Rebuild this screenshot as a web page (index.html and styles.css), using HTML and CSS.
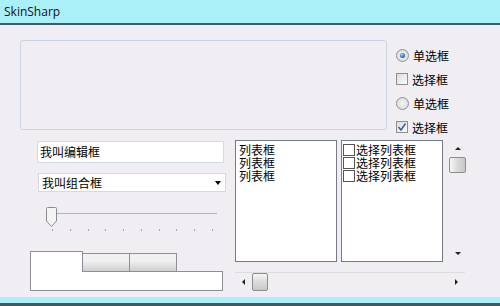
FILE: index.html
```html
<!DOCTYPE html>
<html lang="zh-CN">
  <head>
    <meta charset="UTF-8" />
    <title>SkinSharp</title>
    <link rel="stylesheet" href="styles.css">
  </head>
  <body>
    <div class="window">
      <div class="titlebar">SkinSharp</div>
      <div class="client">
        <div class="top">
          <div class="group"></div>
          <div class="options">
            <label class="option"><span class="radio on"></span>单选框</label>
            <label class="option"><span class="check"></span>选择框</label>
            <label class="option"><span class="radio"></span>单选框</label>
            <label class="option">
              <span class="check">
                <svg width="10" height="10" viewBox="0 0 10 10">
                  <path d="M1.5 5 L4 8 L8.5 1.5" fill="none" stroke="#3b5fa8" stroke-width="1.6" />
                </svg>
              </span>选择框
            </label>
          </div>
        </div>
        <div class="bottom">
          <div class="left">
            <div class="edit">我叫编辑框</div>
            <div class="combo">
              <span>我叫组合框</span>
              <span class="arrow-down"></span>
            </div>
            <div class="slider">
              <div class="track"></div>
              <svg class="thumb" width="11" height="20" viewBox="0 0 11 20">
                <path d="M0.5 1.5 Q0.5 0.5 1.5 0.5 L9.5 0.5 Q10.5 0.5 10.5 1.5 L10.5 14 L5.5 19.5 L0.5 14 Z" fill="#f4f4f4" stroke="#8c8c8c" />
              </svg>
              <div class="ticks">
                <i></i><i></i><i></i><i></i><i></i><i></i><i></i><i></i><i></i><i></i>
              </div>
            </div>
            <div class="tabs">
              <div class="tab-strip">
                <div class="tab active"></div>
                <div class="tab"></div>
                <div class="tab"></div>
              </div>
              <div class="tab-panel"></div>
            </div>
          </div>
          <div class="lists">
            <div class="listbox">
              <div>列表框</div>
              <div>列表框</div>
              <div>列表框</div>
            </div>
            <div class="listbox">
              <div class="item"><span class="box"></span>选择列表框</div>
              <div class="item"><span class="box"></span>选择列表框</div>
              <div class="item"><span class="box"></span>选择列表框</div>
            </div>
            <div class="vscroll">
              <div class="btn"><span class="tri-up"></span></div>
              <div class="sthumb v"></div>
              <div class="space"></div>
              <div class="btn"><span class="tri-down"></span></div>
            </div>
            <div class="hscroll">
              <div class="btn"><span class="tri-left"></span></div>
              <div class="sthumb h"></div>
              <div class="space"></div>
              <div class="btn"><span class="tri-right"></span></div>
            </div>
          </div>
        </div>
      </div>
      <div class="statusbar"></div>
    </div>
  </body>
</html>
```

FILE: styles.css
```css
body {
  margin: 0;
  padding: 0;
  font-family: "Noto Sans CJK SC", "Noto Sans", sans-serif;
  font-size: 12px;
  color: #000;
}
.window {
  width: 500px;
  height: 306px;
  overflow: hidden;
  background: #f0eef2;
  display: flex;
  flex-direction: column;
}
.titlebar {
  height: 23px;
  border-bottom: 2px solid #3e5c60;
  background: #aaf0f8;
  font-family: "Open Sans", sans-serif;
  font-size: 12px;
  line-height: 23px;
  padding-left: 4px;
  color: #111;
}
.client {
  height: 272px;
  padding-left: 20px;
}
.top {
  display: flex;
  align-items: flex-start;
  margin-top: 15px;
}
.group {
  width: 365px;
  height: 88px;
  border: 1px solid #c9d4e6;
  border-radius: 3px;
}
.options {
  margin-left: 9px;
  padding-top: 3px;
}
.option {
  display: flex;
  align-items: center;
  height: 24px;
  gap: 4px;
}
.radio {
  width: 11px;
  height: 11px;
  border: 1px solid #8d9299;
  border-radius: 50%;
  background: radial-gradient(circle at 50% 50%, #f4f4f4, #d6d6d6);
  display: flex;
  align-items: center;
  justify-content: center;
}
.radio.on::after {
  content: "";
  width: 5px;
  height: 5px;
  border-radius: 50%;
  background: radial-gradient(circle at 40% 35%, #9ed4f6, #1d5c9e 70%);
}
.check {
  width: 10px;
  height: 10px;
  border: 1px solid #8f8f8f;
  background: linear-gradient(135deg, #dcdcdc, #fafafa);
  display: flex;
  align-items: center;
  justify-content: center;
}
.bottom {
  display: flex;
  margin-top: 1px;
  padding-left: 17px;
}
.left {
  width: 188px;
}
.edit {
  margin-top: 1px;
  width: 183px;
  height: 20px;
  border: 1px solid #d3dae3;
  background: #fff;
  line-height: 20px;
  padding-left: 2px;
}
.combo {
  margin-top: 10px;
  margin-left: 1px;
  width: 183px;
  height: 17px;
  border: 1px solid #d3dae3;
  background: #fff;
  line-height: 17px;
  padding-left: 3px;
  display: flex;
  justify-content: space-between;
  align-items: center;
}
.arrow-down {
  margin-right: 4px;
  border-left: 3.5px solid transparent;
  border-right: 3.5px solid transparent;
  border-top: 4px solid #000;
}
.slider {
  position: relative;
  margin-top: 15px;
  height: 29px;
}
.track {
  position: absolute;
  left: 11px;
  top: 6px;
  width: 169px;
  height: 1px;
  background: #b4b4b4;
}
.thumb {
  position: absolute;
  left: 9px;
  top: 0;
}
.ticks {
  position: absolute;
  left: 15px;
  top: 22px;
  width: 161px;
  display: flex;
  justify-content: space-between;
}
.ticks i {
  width: 1px;
  height: 2px;
  background: #a8a8a8;
}
.tabs {
  margin-top: 15px;
  margin-left: -7px;
}
.tab-strip {
  display: flex;
  align-items: flex-end;
  height: 20px;
}
.tab {
  width: 46px;
  height: 17px;
  border: 1px solid #8e9099;
  border-bottom: none;
  margin-left: -1px;
  background: linear-gradient(#f2f2f2, #f0f0f0 40%, #cfcfcf);
}
.tab.active {
  width: 51px;
  height: 20px;
  margin-left: 0;
  background: #fff;
  position: relative;
  z-index: 1;
  margin-bottom: -1px;
}
.tab-panel {
  width: 191px;
  height: 18px;
  border: 1px solid #8e9099;
  background: #fff;
}
.lists {
  margin-left: 10px;
  display: grid;
  grid-template-columns: 102px 102px 18px;
  grid-template-rows: 122px 18px;
  column-gap: 4px;
  row-gap: 10px;
}
.listbox {
  border: 1px solid #737a88;
  background: #fff;
  padding: 2px 0 0 3px;
  font-size: 12px;
  line-height: 13px;
}
.listbox + .listbox {
  padding-left: 1px;
}
.item {
  display: flex;
  align-items: center;
  height: 13px;
}
.box {
  width: 10px;
  height: 10px;
  border: 1px solid #555;
  margin-right: 1px;
}
.vscroll {
  margin-left: 2px;
  width: 17px;
  display: flex;
  flex-direction: column;
}
.hscroll {
  grid-column: 1 / 4;
  width: 230px;
  border-top: 1px solid #dcdcdc;
  display: flex;
}
.btn {
  width: 17px;
  height: 17px;
  display: flex;
  align-items: center;
  justify-content: center;
}
.space {
  flex: 1;
}
.sthumb {
  border: 1px solid #8d8d8d;
  border-radius: 2px;
  background: linear-gradient(90deg, #f6f6f6, #dadada 50%, #c8c8c8);
}
.sthumb.v {
  height: 14px;
  width: 15px;
}
.sthumb.h {
  width: 14px;
  height: 16px;
  background: linear-gradient(#f6f6f6, #dadada 50%, #c8c8c8);
}
.tri-up {
  border-left: 3px solid transparent;
  border-right: 3px solid transparent;
  border-bottom: 3px solid #222;
}
.tri-down {
  border-left: 3px solid transparent;
  border-right: 3px solid transparent;
  border-top: 3px solid #222;
}
.tri-left {
  border-top: 3px solid transparent;
  border-bottom: 3px solid transparent;
  border-right: 3px solid #222;
}
.tri-right {
  border-top: 3px solid transparent;
  border-bottom: 3px solid transparent;
  border-left: 3px solid #222;
}
.statusbar {
  margin-top: auto;
  height: 6px;
  border-bottom: 3px solid #3e5c60;
  background: #aaf0f8;
}
```
